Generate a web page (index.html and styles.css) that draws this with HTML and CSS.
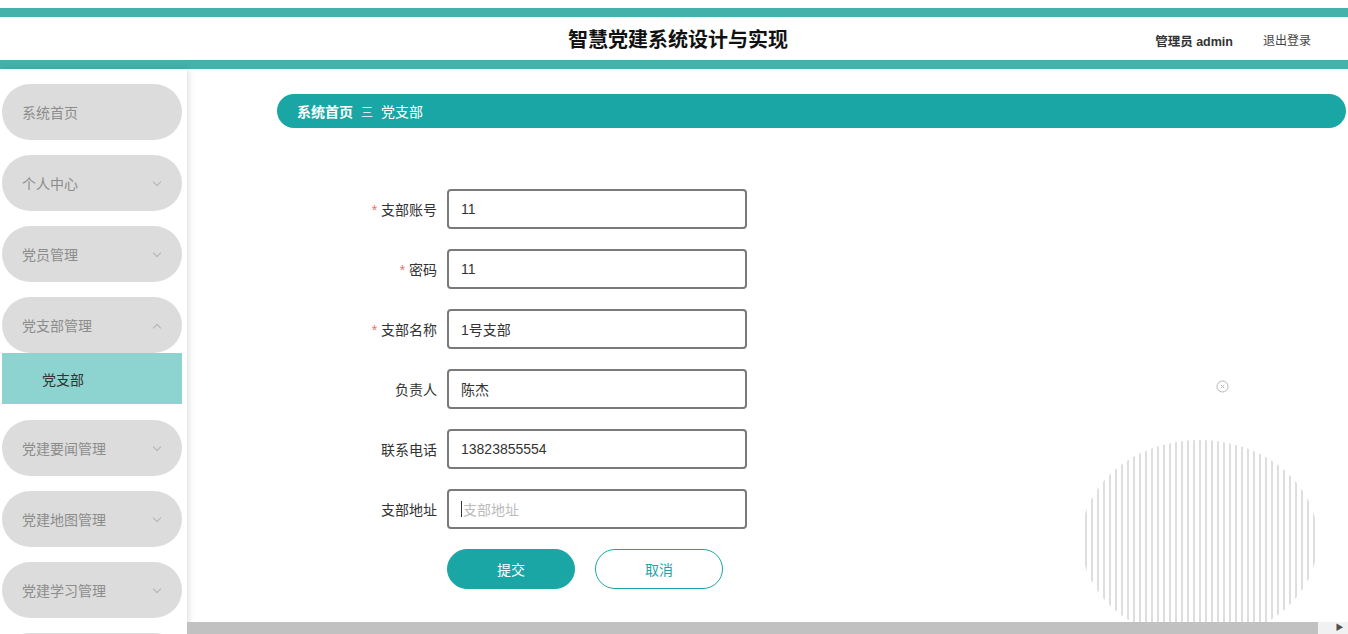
FILE: index.html
```html
<!DOCTYPE html>
<html lang="zh-CN">

<head>
    <meta charset="UTF-8">
    <meta name="viewport" content="width=device-width, initial-scale=1.0">
    <title>智慧党建系统设计与实现</title>
    <link rel="stylesheet" href="styles.css">
</head>

<body class="body">
    <div class="top-gap"></div>
    <header class="header">
        <div class="title">智慧党建系统设计与实现</div>
        <div class="user">
            <span class="user-name">管理员 admin</span>
            <span class="logout">退出登录</span>
        </div>
    </header>

    <div class="layout">
        <aside class="sidebar">
            <div class="menu">系统首页</div>
            <div class="menu">个人中心<span class="arrow down"></span></div>
            <div class="menu">党员管理<span class="arrow down"></span></div>
            <div class="menu open">党支部管理<span class="arrow up"></span></div>
            <div class="submenu">党支部</div>
            <div class="menu">党建要闻管理<span class="arrow down"></span></div>
            <div class="menu">党建地图管理<span class="arrow down"></span></div>
            <div class="menu">党建学习管理<span class="arrow down"></span></div>
            <div class="menu"></div>
        </aside>

        <main class="main">
            <div class="content">
                <div class="crumbs">
                    <span class="crumb-home">系统首页</span>
                    <span class="crumb-sep">三</span>
                    <span class="crumb-cur">党支部</span>
                </div>

                <form class="form">
                    <div class="row">
                        <label class="label"><i class="star">*</i> 支部账号</label>
                        <input class="input" value="11">
                    </div>
                    <div class="row">
                        <label class="label"><i class="star">*</i> 密码</label>
                        <input class="input" value="11">
                    </div>
                    <div class="row">
                        <label class="label"><i class="star">*</i> 支部名称</label>
                        <input class="input" value="1号支部">
                    </div>
                    <div class="row">
                        <label class="label">负责人</label>
                        <input class="input" value="陈杰">
                    </div>
                    <div class="row">
                        <label class="label">联系电话</label>
                        <input class="input" value="13823855554">
                    </div>
                    <div class="row">
                        <label class="label">支部地址</label>
                        <div class="input empty"><span class="caret"></span>支部地址</div>
                    </div>
                    <div class="btns">
                        <button type="button" class="btn primary">提交</button>
                        <button type="button" class="btn ghost">取消</button>
                    </div>
                </form>

                <span class="close-dot">
                    <svg width="13" height="13" viewBox="0 0 13 13">
                        <circle cx="6.5" cy="6.5" r="5.5" fill="none" stroke="#b5b5b5" stroke-width="1"/>
                        <path d="M4.8 4.8 L8.2 8.2 M8.2 4.8 L4.8 8.2" stroke="#b5b5b5" stroke-width="1"/>
                    </svg>
                </span>
                <div class="stripes"></div>
            </div>
            <div class="hscroll">
                <div class="thumb"></div>
                <div class="scroll-btn">&#9654;</div>
            </div>
        </main>
    </div>
</body>

</html>
```

FILE: styles.css
```css
.body {
    margin: 0;
    height: 100vh;
    overflow: hidden;
    display: flex;
    flex-direction: column;
    background: #fff;
    font-family: 'Liberation Sans', 'Noto Sans CJK SC', sans-serif;
    font-size: 14px;
}

.top-gap {
    height: 8px;
}

.header {
    height: 43px;
    border-top: 9px solid #43b2aa;
    border-bottom: 9px solid #43b2aa;
    display: flex;
    align-items: center;
    justify-content: center;
    position: relative;
}

.title {
    font-size: 20px;
    font-weight: bold;
    color: #111;
    margin-left: 8px;
}

.user {
    position: absolute;
    right: 37px;
    top: 14px;
    display: flex;
    gap: 30px;
    font-size: 12px;
}

.user-name {
    font-weight: bold;
    color: #333;
    font-size: 12.5px;
}

.logout {
    color: #444;
}

.layout {
    flex: 1;
    display: flex;
    min-height: 0;
}

.sidebar {
    width: 187px;
    flex-shrink: 0;
    padding-top: 15px;
    box-shadow: 2px 0 6px rgb(0 0 0 / 0.12);
    position: relative;
    z-index: 1;
    background: #fff;
    overflow: hidden;
}

.menu {
    width: 180px;
    height: 56px;
    margin: 0 0 15px 2px;
    border-radius: 28px;
    background: #dcdcdc;
    color: #8c8c8c;
    display: flex;
    align-items: center;
    padding-left: 20px;
    box-sizing: border-box;
    position: relative;
}

.menu.open {
    margin-bottom: 0;
}

.arrow {
    position: absolute;
    left: 152px;
    top: 24px;
    width: 5px;
    height: 5px;
    border-right: 1px solid #b3b3b3;
    border-bottom: 1px solid #b3b3b3;
    transform: rotate(45deg);
}

.arrow.up {
    top: 28px;
    transform: rotate(-135deg);
}

.submenu {
    width: 180px;
    height: 51px;
    margin: 0 0 16px 2px;
    background: #8dd3d0;
    color: #333;
    display: flex;
    align-items: center;
    padding-left: 40px;
    box-sizing: border-box;
}

.main {
    flex: 1;
    display: flex;
    flex-direction: column;
    min-width: 0;
}

.content {
    flex: 1;
    position: relative;
    padding-top: 25px;
    overflow: hidden;
}

.crumbs {
    height: 34px;
    margin-left: 90px;
    margin-right: 2px;
    border-radius: 17px;
    background: #1aa6a4;
    color: #fff;
    display: flex;
    align-items: center;
    padding-left: 20px;
    gap: 8px;
}

.crumb-home {
    font-weight: bold;
}

.crumb-sep {
    font-size: 12px;
    opacity: 0.8;
}

.form {
    margin-top: 61px;
}

.row {
    display: flex;
    align-items: center;
    margin-bottom: 20px;
}

.label {
    width: 250px;
    padding-right: 10px;
    text-align: right;
    color: #333;
}

.star {
    font-style: normal;
    color: #f56c6c;
}

.input {
    width: 300px;
    height: 40px;
    box-sizing: border-box;
    border: 2px solid #7a7a7a;
    border-radius: 4px;
    padding: 0 12px;
    font: inherit;
    color: #333;
    outline: none;
    display: flex;
    align-items: center;
}

.input.empty {
    color: #bbb;
}

.caret {
    width: 1px;
    height: 16px;
    background: #333;
    margin-right: 1px;
}

.btns {
    display: flex;
    gap: 20px;
    padding-left: 260px;
    margin-top: 1px;
}

.btn {
    width: 128px;
    height: 40px;
    border-radius: 20px;
    font: inherit;
    cursor: pointer;
}

.btn.primary {
    background: #1aa6a4;
    border: 1px solid #1aa6a4;
    color: #fff;
}

.btn.ghost {
    background: #fff;
    border: 1px solid #1aa6a4;
    color: #1aa6a4;
}

.close-dot {
    position: absolute;
    left: 1029px;
    top: 311px;
    line-height: 0;
}

.stripes {
    position: absolute;
    left: 894px;
    top: 371px;
    width: 237px;
    height: 200px;
    border-radius: 50%;
    background: repeating-linear-gradient(90deg, #fff 0, #fff 4px, #dedede 4px, #dedede 6px);
}

.hscroll {
    height: 12px;
    background: #f1f1f1;
    display: flex;
    position: relative;
    z-index: 2;
}

.thumb {
    width: 1131px;
    background: #c1c1c1;
}

.scroll-btn {
    margin-left: auto;
    width: 17px;
    font-size: 8px;
    line-height: 12px;
    color: #505050;
    text-align: center;
}
```
